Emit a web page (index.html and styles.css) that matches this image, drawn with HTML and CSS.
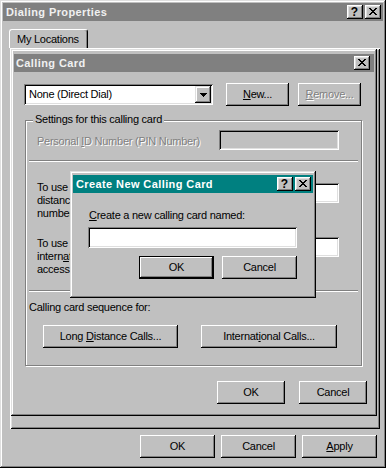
FILE: index.html
```html
<!DOCTYPE html>
<html lang="en">
<head>
<meta charset="utf-8">
<title>Dialing Properties</title>
<link rel="stylesheet" href="styles.css">
</head>
<body>
<div class="win outer">
  <div class="titlebar inactive">
    <span class="title">Dialing Properties</span>
    <span class="tbtns">
      <span class="tbtn help">?</span>
      <span class="tbtn"><svg class="xglyph" width="8" height="7" viewBox="0 0 8 7"><path d="M0 0h2v1H0zM6 0h2v1H6zM1 1h2v1H1zM5 1h2v1H5zM2 2h4v1H2zM3 3h2v1H3zM2 4h4v1H2zM1 5h2v1H1zM5 5h2v1H5zM0 6h2v1H0zM6 6h2v1H6z"/></svg></span>
    </span>
  </div>
  <div class="tabstrip"><div class="tab">My Locations</div></div>
  <div class="panel"></div>
  <div class="btnrow mainbtns">
    <button class="btn w75">OK</button>
    <button class="btn w75">Cancel</button>
    <button class="btn w75"><u>A</u>pply</button>
  </div>

  <div class="win card">
    <div class="titlebar inactive card-title">
      <span class="title">Calling Card</span>
      <span class="tbtns card-tbtns">
        <span class="tbtn"><svg class="xglyph" width="8" height="7" viewBox="0 0 8 7"><path d="M0 0h2v1H0zM6 0h2v1H6zM1 1h2v1H1zM5 1h2v1H5zM2 2h4v1H2zM3 3h2v1H3zM2 4h4v1H2zM1 5h2v1H1zM5 5h2v1H5zM0 6h2v1H0zM6 6h2v1H6z"/></svg></span>
      </span>
    </div>
    <div class="card-body">
      <div class="row1">
        <div class="combo field">
          <span class="combo-text">None (Direct Dial)</span>
          <span class="combo-btn"><svg width="7" height="4" viewBox="0 0 7 4"><path d="M0 0h7v1H0zM1 1h5v1H1zM2 2h3v1H2zM3 3h1v1H3z"/></svg></span>
        </div>
        <button class="btn w63 new-btn"><u>N</u>ew...</button>
        <button class="btn w63 remove-btn disabled"><u>R</u>emove...</button>
      </div>
      <div class="group">
        <div class="glabel">Settings for this calling card</div>
        <div class="pinrow">
          <span class="disabled-text pintext">Personal <u>I</u>D Number (PIN Number)</span>
          <span class="field pinfield"></span>
        </div>
        <div class="sep"></div>
        <div class="inforow first">
          <div class="infotext">To use a calling card for long<br>distance calls, enter the access<br>number:</div>
          <span class="field infofield"></span>
        </div>
        <div class="inforow second">
          <div class="infotext">To use a calling card for<br>intern<u>a</u>tional calls, enter the<br>access number:</div>
          <span class="field infofield"></span>
        </div>
        <div class="sep sep2"></div>
        <div class="seqlabel">Calling card sequence for:</div>
        <div class="seqbtns">
          <button class="btn ld-btn">Long <u>D</u>istance Calls...</button>
          <button class="btn intl-btn">Internat<u>i</u>onal Calls...</button>
        </div>
      </div>
      <div class="btnrow cardbtns">
        <button class="btn w68">OK</button>
        <button class="btn w68">Cancel</button>
      </div>
    </div>
  </div>

  <div class="win dlg">
    <div class="titlebar active">
      <span class="title">Create New Calling Card</span>
      <span class="tbtns">
        <span class="tbtn help">?</span>
        <span class="tbtn"><svg class="xglyph" width="8" height="7" viewBox="0 0 8 7"><path d="M0 0h2v1H0zM6 0h2v1H6zM1 1h2v1H1zM5 1h2v1H5zM2 2h4v1H2zM3 3h2v1H3zM2 4h4v1H2zM1 5h2v1H1zM5 5h2v1H5zM0 6h2v1H0zM6 6h2v1H6z"/></svg></span>
      </span>
    </div>
    <div class="dlg-body">
      <div class="dlg-label"><u>C</u>reate a new calling card named:</div>
      <div class="field dlg-field"></div>
      <div class="btnrow dlgbtns">
        <button class="btn w75 default">OK</button>
        <button class="btn w75">Cancel</button>
      </div>
    </div>
  </div>
</div>
</body>
</html>
```

FILE: styles.css
```css
html, body {
  margin: 0;
  padding: 0;
  background: #c0c0c0;
}
body {
  font-family: "Liberation Sans", Arial, sans-serif;
  font-size: 11px;
  line-height: 13px;
  letter-spacing: -0.25px;
  color: #000;
}
u { text-decoration: underline; text-underline-offset: 1px; }

.win {
  box-sizing: border-box;
  background: #c0c0c0;
  box-shadow: inset -1px -1px #000, inset 1px 1px #dfdfdf, inset -2px -2px #808080, inset 2px 2px #fff;
}
.outer {
  position: relative;
  width: 386px;
  height: 468px;
  padding: 3px;
  display: flex;
  flex-direction: column;
}

.titlebar {
  flex: none;
  height: 18px;
  display: flex;
  align-items: center;
  padding-left: 3px;
}
.titlebar.inactive { background: #808080; color: #f0f0f0; }
.titlebar.active { background: #008080; color: #fff; }
.title { flex: 1; font-weight: bold; white-space: nowrap; letter-spacing: 0.4px; }
.tbtns { display: flex; gap: 2px; margin-right: 2px; }
.card-title { padding-left: 2px; }
.card-tbtns { margin-right: 4px; }
.tbtn {
  box-sizing: border-box;
  width: 16px;
  height: 14px;
  background: #c0c0c0;
  color: #000;
  box-shadow: inset -1px -1px #000, inset 1px 1px #fff, inset -2px -2px #808080, inset 2px 2px #dfdfdf;
  display: flex;
  align-items: center;
  justify-content: center;
}
.tbtn svg { display: block; fill: #000; shape-rendering: crispEdges; margin: 0 1px 1px 0; }
.help { font-weight: bold; font-size: 12px; line-height: 12px; padding-right: 1px; letter-spacing: 0; }

.tabstrip { display: flex; margin-top: 8px; padding-left: 6px; flex: none; }
.tab {
  box-sizing: border-box;
  width: 79px;
  height: 19px;
  padding-left: 7px;
  display: flex;
  align-items: center;
  padding-top: 1px;
  border-top: 1px solid #fff;
  border-left: 1px solid #fff;
  border-right: 1px solid #000;
  border-radius: 3px 3px 0 0;
  box-shadow: inset -1px 0 #808080;
}
.panel {
  flex: none;
  box-sizing: border-box;
  margin-left: 7px;
  width: 370px;
  height: 381px;
  box-shadow: inset 1px 1px #fff, inset -1px -1px #000, inset 2px 2px #dfdfdf, inset -2px -2px #808080;
}

.btnrow { display: flex; justify-content: flex-end; }
.mainbtns { margin-top: 6px; gap: 6px; padding-right: 6px; }

.btn {
  box-sizing: border-box;
  font: inherit;
  line-height: 13px;
  letter-spacing: -0.25px;
  color: #000;
  height: 23px;
  padding: 0;
  border: 0;
  background: #c0c0c0;
  box-shadow: inset -1px -1px #000, inset 1px 1px #fff, inset -2px -2px #808080;
  text-align: center;
  white-space: nowrap;
}
.btn.default {
  box-shadow: inset 0 0 0 1px #000, inset -2px -2px #000, inset 2px 2px #fff, inset -3px -3px #808080;
}
.btn.disabled, .disabled-text {
  color: #808080;
  text-shadow: 1px 1px #fff;
}
.w75 { width: 75px; }
.w68 { width: 68px; }
.w63 { width: 63px; }

.field {
  box-sizing: border-box;
  background: #fff;
  box-shadow: inset 1px 1px #808080, inset -1px -1px #fff, inset 2px 2px #000, inset -2px -2px #dfdfdf;
}

.card {
  position: absolute;
  left: 11px;
  top: 49px;
  width: 366px;
  height: 367px;
  padding: 5px 3px 3px;
  z-index: 2;
}
.card-body { padding: 11px 7px 0 10px; }
.row1 { display: flex; align-items: flex-start; }
.combo {
  width: 189px;
  height: 21px;
  margin-top: 1px;
  padding: 2px;
  display: flex;
  align-items: center;
}
.combo-text { flex: 1; padding-left: 3px; white-space: nowrap; }
.combo-btn {
  box-sizing: border-box;
  width: 16px;
  height: 17px;
  background: #c0c0c0;
  box-shadow: inset -1px -1px #000, inset 1px 1px #dfdfdf, inset -2px -2px #808080, inset 2px 2px #fff;
  display: flex;
  align-items: center;
  justify-content: center;
}
.combo-btn svg { display: block; fill: #000; shape-rendering: crispEdges; }
.new-btn { margin-left: 13px; }
.remove-btn { margin-left: 9px; }

.group {
  box-sizing: border-box;
  width: 337px;
  margin: 14px 0 0 1px;
  padding-bottom: 17px;
  border: 1px solid #808080;
  box-shadow: inset 1px 1px #fff, 1px 1px #fff;
}
.glabel {
  width: max-content;
  margin: -8px 0 0 7px;
  padding: 0 2px;
  background: #c0c0c0;
}
.pinrow {
  display: flex;
  align-items: center;
  margin-top: 4px;
  padding: 0 22px 0 11px;
}
.pintext { padding-top: 3px; white-space: nowrap; }
.pinfield { margin-left: auto; width: 120px; height: 20px; background: #c0c0c0; }
.sep {
  margin: 10px 3px 0;
  border-top: 1px solid #808080;
  border-bottom: 1px solid #fff;
}
.sep2 { margin-top: 14px; }
.inforow {
  display: flex;
  align-items: flex-start;
  padding: 0 22px 0 11px;
}
.inforow.first { margin-top: 19px; }
.inforow.second { margin-top: 17px; }
.infotext { white-space: nowrap; }
.infofield { margin-left: auto; width: 100px; height: 20px; }
.inforow.first .infofield { margin-top: 2px; }
.seqlabel { margin-top: 9px; padding-left: 3px; }
.seqbtns { display: flex; margin-top: 11px; padding-left: 17px; }
.ld-btn { width: 135px; }
.intl-btn { width: 136px; margin-left: 23px; }
.cardbtns { margin-top: 15px; gap: 14px; }

.dlg {
  position: absolute;
  left: 70px;
  top: 171px;
  width: 246px;
  height: 127px;
  padding: 4px 3px 3px;
  z-index: 3;
}
.dlg-body { padding: 16px 16px 0 15px; }
.dlg-label { padding-left: 1px; white-space: nowrap; }
.dlg-field { margin-top: 5px; width: 209px; height: 21px; }
.dlgbtns { margin-top: 8px; gap: 8px; }
```
